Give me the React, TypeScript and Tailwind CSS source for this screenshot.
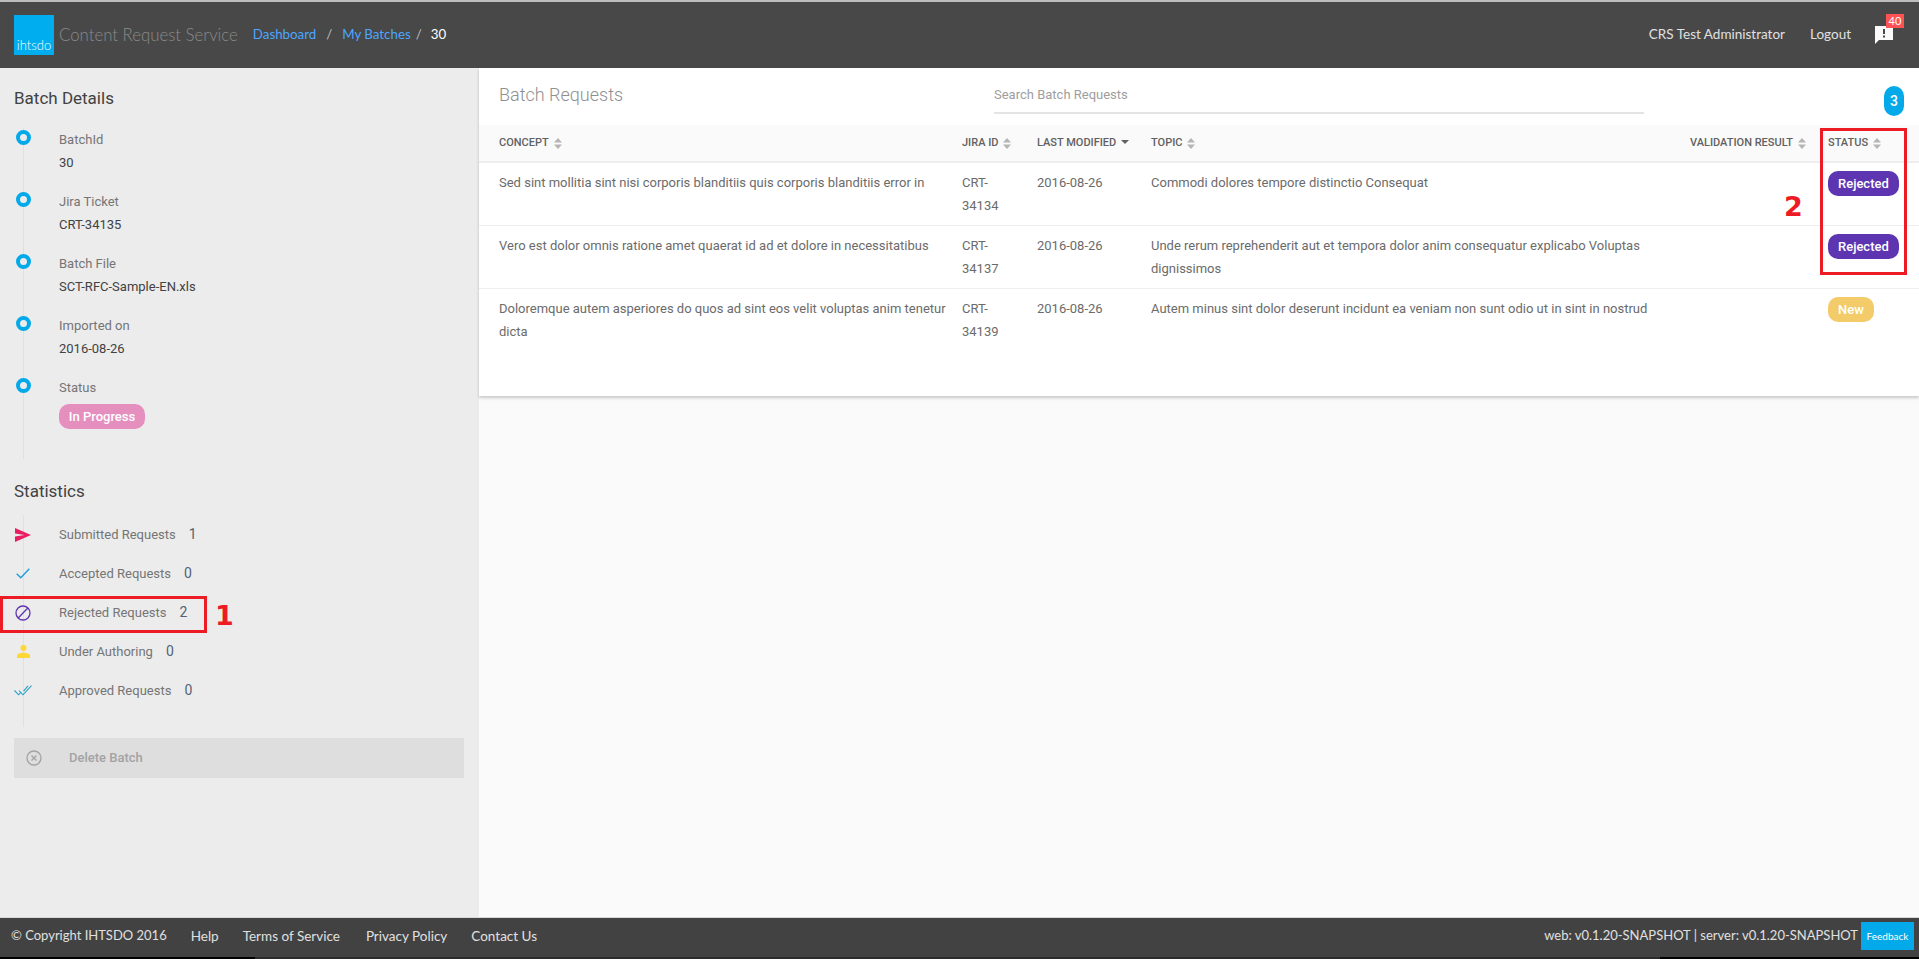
import type { ReactNode } from 'react';

const details = [
  { label: 'BatchId', value: '30' },
  { label: 'Jira Ticket', value: 'CRT-34135' },
  { label: 'Batch File', value: 'SCT-RFC-Sample-EN.xls' },
  { label: 'Imported on', value: '2016-08-26' },
];

const rows = [
  {
    concept: 'Sed sint mollitia sint nisi corporis blanditiis quis corporis blanditiis error in',
    jira: 'CRT-34134',
    topic: 'Commodi dolores tempore distinctio Consequat',
    status: 'Rejected',
  },
  {
    concept: 'Vero est dolor omnis ratione amet quaerat id ad et dolore in necessitatibus',
    jira: 'CRT-34137',
    topic: 'Unde rerum reprehenderit aut et tempora dolor anim consequatur explicabo Voluptas dignissimos',
    status: 'Rejected',
  },
  {
    concept: 'Doloremque autem asperiores do quos ad sint eos velit voluptas anim tenetur dicta',
    jira: 'CRT-34139',
    topic: 'Autem minus sint dolor deserunt incidunt ea veniam non sunt odio ut in sint in nostrud',
    status: 'New',
  },
];

function SortIcon() {
  return (
    <svg width="8" height="11" viewBox="0 0 8 11" className="inline-block ml-[5px] -mb-[2px]">
      <path d="M4 0L8 4.4H0z M0 6.6H8L4 11z" fill="#b5b5b5" />
    </svg>
  );
}

function SortDown() {
  return (
    <svg width="8" height="4" viewBox="0 0 8 4" className="inline-block ml-[5px] mb-[2px]">
      <path d="M0 0H8L4 4z" fill="#616161" />
    </svg>
  );
}

function SendIcon() {
  return (
    <svg width="16" height="14" viewBox="0 0 16 14">
      <path d="M0 0L16 7L0 14V8.6L9.5 7L0 5.4z" fill="#e91e63" />
    </svg>
  );
}

function CheckIcon() {
  return (
    <svg width="14" height="11" viewBox="0 0 14 11" fill="none">
      <path d="M0.7 5.8L4.8 9.8L13.3 0.7" stroke="#1e9ede" strokeWidth="1.4" />
    </svg>
  );
}

function BanIcon() {
  return (
    <svg width="16" height="16" viewBox="0 0 16 16" fill="none">
      <circle cx="8" cy="8" r="7" stroke="#5e35b1" strokeWidth="1.3" />
      <path d="M3.2 13L12.8 3" stroke="#5e35b1" strokeWidth="1.3" />
    </svg>
  );
}

function PersonIcon() {
  return (
    <svg width="13" height="13" viewBox="0 0 13 13">
      <circle cx="6.5" cy="3" r="3" fill="#fdd835" />
      <path d="M0 13V10.6C0 8.8 3.6 7.8 6.5 7.8S13 8.8 13 10.6V13z" fill="#fdd835" />
    </svg>
  );
}

function DoubleCheckIcon() {
  return (
    <svg width="18" height="11" viewBox="0 0 18 11" fill="none">
      <path d="M0.5 5.5L4.6 9.8L6.5 7.6M5 5.5L9 9.8L17.5 0.6M9.6 6.2L14 0.8" stroke="#26a3c4" strokeWidth="1.1" />
    </svg>
  );
}

const stats: { label: string; count: number; icon: ReactNode }[] = [
  { label: 'Submitted Requests', count: 1, icon: <SendIcon /> },
  { label: 'Accepted Requests', count: 0, icon: <CheckIcon /> },
  { label: 'Rejected Requests', count: 2, icon: <BanIcon /> },
  { label: 'Under Authoring', count: 0, icon: <PersonIcon /> },
  { label: 'Approved Requests', count: 0, icon: <DoubleCheckIcon /> },
];

function StatusBadge({ status }: { status: string }) {
  const color = status === 'New' ? 'bg-[#f3cb69]' : 'bg-[#5e35b1]';
  return (
    <span className={`inline-block h-[25px] px-[10px] rounded-[10px] text-white font-medium text-[13px] leading-[25px] ${color}`}>
      {status}
    </span>
  );
}

function Sidebar() {
  return (
    <aside className="w-[479px] shrink-0 bg-[#ececec] pt-[18px]">
      <h3 className="pl-[14px] text-[17px] leading-[24px] text-[#424242] mb-[18px]">Batch Details</h3>
      <div className="ml-[23px] border-l border-[#e0e0e0] pl-[35px] pb-[30px]">
        {details.map((item) => (
          <div key={item.label} className="relative h-[62px] text-[13px] leading-[23px]">
            <span className="absolute left-[-43px] top-[2px] w-[15px] h-[15px] rounded-full border-[4px] border-[#03a9e8] bg-[#ececec]" />
            <div className="text-[#757575]">{item.label}</div>
            <div className="text-[#424242]">{item.value}</div>
          </div>
        ))}
        <div className="relative text-[13px] leading-[23px]">
          <span className="absolute left-[-43px] top-[2px] w-[15px] h-[15px] rounded-full border-[4px] border-[#03a9e8] bg-[#ececec]" />
          <div className="text-[#757575] mb-[5px]">Status</div>
          <span className="block w-[86px] h-[25px] rounded-[10px] bg-[#e58fbf] text-white font-medium text-center leading-[25px]">In Progress</span>
        </div>
      </div>

      <h3 className="pl-[14px] mt-[20px] text-[17px] leading-[24px] text-[#424242] mb-[12px]">Statistics</h3>
      <div className="ml-[23px] border-l border-[#e0e0e0] pb-[17px]">
        {stats.map((s) => (
          <div key={s.label} className="relative h-[39px] pl-[35px] flex items-center text-[13px]">
            <span className="absolute left-[-25px] w-[48px] h-[20px] flex items-center justify-center">{s.icon}</span>
            <span className="text-[#757575]">{s.label}</span>
            <span className="ml-[13px] text-[14px] text-[#546373]">{s.count}</span>
          </div>
        ))}
      </div>

      <button className="ml-[14px] mt-[11px] w-[450px] h-[40px] bg-[#dedede] flex items-center pl-[12px] text-[13px] font-medium text-[#a3a3a3]">
        <svg width="16" height="16" viewBox="0 0 16 16" fill="none" stroke="#a3a3a3" strokeWidth="1.3">
          <circle cx="8" cy="8" r="7" />
          <path d="M5.5 5.5L10.5 10.5M10.5 5.5L5.5 10.5" />
        </svg>
        <span className="ml-[27px]">Delete Batch</span>
      </button>
    </aside>
  );
}

function RequestsCard() {
  return (
    <section className="bg-white h-[328px] shadow-[0_2px_3px_rgba(0,0,0,0.2)]">
      <div className="h-[57px] flex pl-[20px] pr-[15px]">
        <h3 className="w-[495px] pt-[15px] text-[18px] leading-[24px] font-light text-[#8f8f8f]">Batch Requests</h3>
        <div className="w-[650px] h-[46px] border-b-2 border-[#e4e4e4] pt-[16px] text-[13px] leading-[22px] text-[#9e9e9e]">Search Batch Requests</div>
        <div className="ml-auto mt-[18px] w-[20px] h-[30px] rounded-[10px] bg-[#03a9e8] text-white text-[14px] font-medium leading-[30px] text-center">3</div>
      </div>
      <table className="w-full table-fixed border-collapse text-[13px] leading-[23px] text-[#6b6b6b]">
        <colgroup>
          <col className="w-[475px]" />
          <col className="w-[75px]" />
          <col className="w-[114px]" />
          <col className="w-[539px]" />
          <col className="w-[138px]" />
          <col className="w-[99px]" />
        </colgroup>
        <thead>
          <tr className="h-[37px] bg-[#fafafa] border-b-2 border-[#eeeeee] text-[11px] text-left text-[#616161]">
            <th className="font-medium pl-[20px] pr-2 pb-[2px]">CONCEPT<SortIcon /></th>
            <th className="font-medium px-2 pb-[2px] whitespace-nowrap">JIRA ID<SortIcon /></th>
            <th className="font-medium px-2 pb-[2px] whitespace-nowrap">LAST MODIFIED<SortDown /></th>
            <th className="font-medium px-2 pb-[2px]">TOPIC<SortIcon /></th>
            <th className="font-medium px-2 pb-[2px] whitespace-nowrap">VALIDATION RESULT<SortIcon /></th>
            <th className="font-medium px-2 pb-[2px]">STATUS<SortIcon /></th>
          </tr>
        </thead>
        <tbody>
          {rows.map((row, idx) => (
            <tr key={row.jira} className={idx < rows.length - 1 ? 'border-b border-[#eeeeee]' : ''}>
              <td className="align-top pl-[20px] pr-2 py-2">{row.concept}</td>
              <td className="align-top px-2 py-2">{row.jira}</td>
              <td className="align-top px-2 py-2">2016-08-26</td>
              <td className="align-top px-2 py-2">{row.topic}</td>
              <td className="align-top px-2 py-2" />
              <td className="align-top px-2 py-2"><StatusBadge status={row.status} /></td>
            </tr>
          ))}
        </tbody>
      </table>
    </section>
  );
}

export default function App() {
  return (
    <div className="relative h-[959px] overflow-hidden flex flex-col bg-[#fafafa] font-['Roboto',sans-serif]">
      <div className="h-[2px] bg-[#bdbdbd] shrink-0" />
      <header className="h-[66px] shrink-0 bg-[#484848] flex items-center pl-[14px] pr-[15px] pb-[1px] font-['Lato',sans-serif]">
        <div className="w-[40px] h-[40px] mt-[1px] bg-[#00aeef] flex items-end justify-center text-white text-[13px] leading-[19px] font-light">ihtsdo</div>
        <span className="ml-[5px] text-[16.8px] font-light text-[#8a8a8a]">Content Request Service</span>
        <nav className="ml-[15px] flex items-center text-[13.3px] text-[#4da6ff]">
          <span>Dashboard</span>
          <span className="mx-[10px] text-[#bdbdbd]">/</span>
          <span>My Batches</span>
          <span className="mx-[5px] text-[#bdbdbd]">/</span>
          <span className="ml-[4px] text-white">30</span>
        </nav>
        <span className="ml-auto text-[13.5px] text-[#e0e0e0]">CRS Test Administrator</span>
        <span className="ml-[25px] text-[13.5px] text-[#e0e0e0]">Logout</span>
        <span className="relative ml-[24px] mr-[11px] w-[18px] h-[18px] mt-[1px]">
          <svg width="18" height="18" viewBox="0 0 18 18">
            <path d="M0 0H18V14H4L0 18z" fill="#fafafa" />
            <path d="M8 3H10V8H8zM8 9.5H10V11.5H8z" fill="#484848" />
          </svg>
          <span className="absolute left-[11px] top-[-12px] w-[18px] h-[14px] bg-[#ff5252] text-white text-[11px] leading-[14px] text-center">40</span>
        </span>
      </header>

      <div className="flex-1 flex min-h-0">
        <Sidebar />
        <main className="flex-1 min-w-0">
          <RequestsCard />
        </main>
      </div>

      <footer className="h-[40px] shrink-0 bg-[#424242] border-t border-[#d8d8d8] flex items-center pl-[11px] pr-[5px] pb-[3px] text-[13.5px] text-[#e0e0e0] font-['Lato',sans-serif]">
        <span className="text-[13px]">© Copyright IHTSDO 2016</span>
        <span className="ml-[24px]">Help</span>
        <span className="ml-[24px]">Terms of Service</span>
        <span className="ml-[26px]">Privacy Policy</span>
        <span className="ml-[24px]">Contact Us</span>
        <span className="ml-auto text-[13px]">web: v0.1.20-SNAPSHOT | server: v0.1.20-SNAPSHOT</span>
        <span className="ml-[3px] w-[53px] h-[28px] bg-[#03a9e8] text-white text-[10px] leading-[28px] text-center">Feedback</span>
      </footer>
      <div className="h-[2px] shrink-0 flex">
        <div className="w-[255px] bg-black" />
        <div className="flex-1 bg-[#2b2b2b]" />
        <div className="w-[259px] bg-black" />
      </div>

      {/* annotations drawn over the screenshot */}
      <div className="absolute left-0 top-[596px] w-[207px] h-[37px] border-[3px] border-[#ed1c24]" />
      <div className="absolute left-[215px] top-[599px] text-[27px] leading-[34px] font-bold text-[#ed1c24] font-['DejaVu_Sans',sans-serif]">1</div>
      <div className="absolute left-[1820px] top-[128px] w-[87px] h-[147px] border-[3px] border-[#ed1c24]" />
      <div className="absolute left-[1784px] top-[190px] text-[27px] leading-[34px] font-bold text-[#ed1c24] font-['DejaVu_Sans',sans-serif]">2</div>
    </div>
  );
}
